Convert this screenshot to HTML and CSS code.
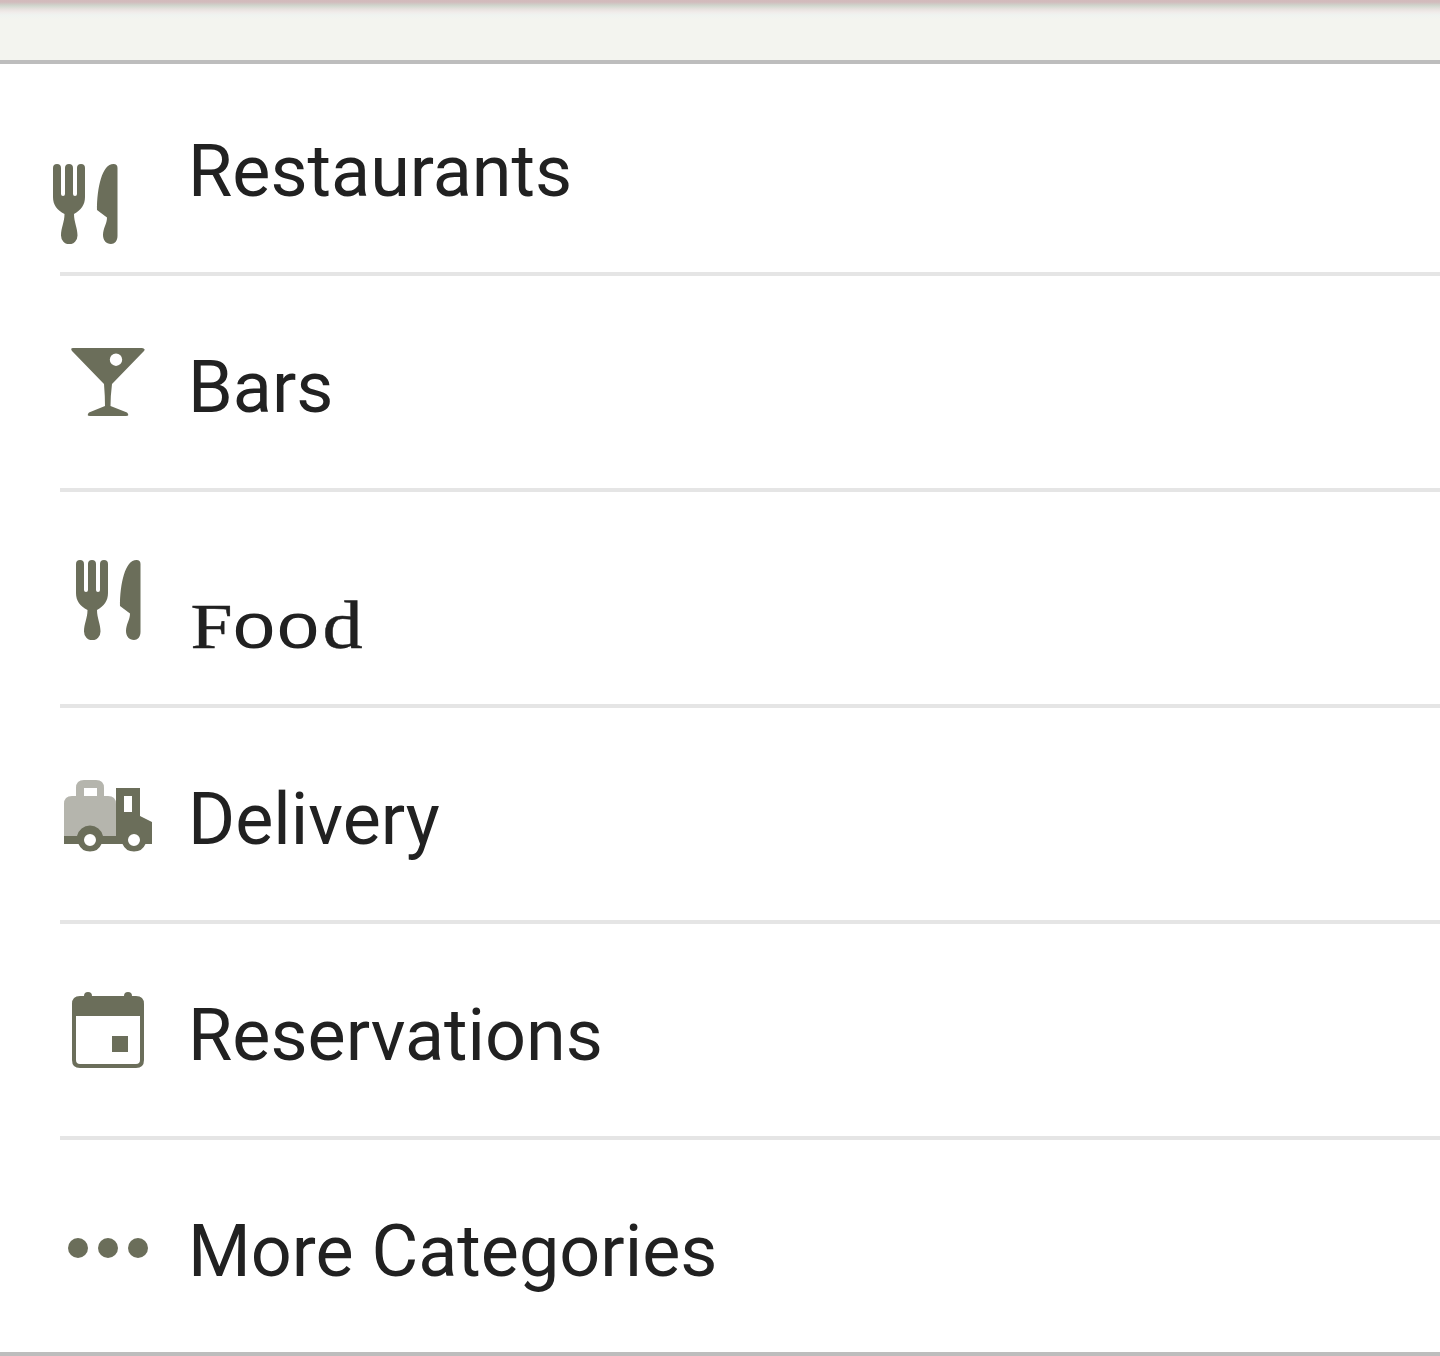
FILE: index.html
```html
<!DOCTYPE html>
<html lang="en">
<head>
<meta charset="utf-8">
<title>Categories</title>
<link rel="stylesheet" href="styles.css">
</head>
<body>
<svg class="symbols" aria-hidden="true">
  <symbol id="cutlery" viewBox="0 0 66 80">
    <path d="M0 4a4 4 0 0 1 8 0v26a2 2 0 0 0 4 0V4a4 4 0 0 1 8 0v26a2 2 0 0 0 4 0V4a4 4 0 0 1 8 0v29c0 8-4 13-11 17c0 8 3.500 14 3.500 21.500a8 8.500 0 0 1-16.500 0C8 64 11.500 58 11.500 50C4 46 0 41 0 33Z"/>
    <path d="M44 46C44 24 49 0 60.500 0a4 4 0 0 1 4 4v68c0 5-3 8-6.500 8c-5 0-8-4-8-9c0-7 4-11 4-17.500Z"/>
  </symbol>
</svg>
<header class="top"></header>
<ul class="list">
  <li class="row row-first">
    <svg class="icon"><use href="#cutlery" x="13" y="20" width="66" height="80"/></svg>
    <span class="label">Restaurants</span>
  </li>
  <li class="row">
    <svg class="icon" viewBox="0 0 120 120"><path fill-rule="evenodd" d="M25 12H94Q98 13 96 15L64 48Q62.500 60 62.500 70L79 76.500Q82 80 78 80H42Q38 80 41 76.500L57 70Q57 60 56 48L24 15Q22 12 25 12ZM68 17.500a6.200 6.200 0 1 0 0 12.400a6.200 6.200 0 1 0 0-12.400Z"/></svg>
    <span class="label">Bars</span>
  </li>
  <li class="row">
    <svg class="icon"><use href="#cutlery" x="28" y="8" width="66" height="80"/></svg>
    <svg class="label-typed" viewBox="0 0 200 80"><text transform="scale(1.2 1)" x="-0.500 33.400 70 109.500" y="58"><tspan class="cap">F</tspan>oo<tspan class="stem">d</tspan></text></svg>
  </li>
  <li class="row">
    <svg class="icon" viewBox="0 0 120 120">
      <path class="pale" fill-rule="evenodd" d="M16 68V36q0-8 8-8h4v-8q0-8 8-8h12q8 0 8 8v8h4q8 0 8 8v32H52a10 10 0 0 0-20 0ZM36 20v8h13v-8Z"/>
      <path fill-rule="evenodd" d="M68 20H92V48L104 54V76H97.500a12.500 12.500 0 0 1-23 0H53.500a12.500 12.500 0 0 1-23 0H16V68H29a13.300 13.300 0 0 1 26 0H68ZM76 28V44H84V28ZM42 66a6 6 0 1 0 0 12a6 6 0 1 0 0-12ZM86 66a6 6 0 1 0 0 12a6 6 0 1 0 0-12Z"/>
    </svg>
    <span class="label">Delivery</span>
  </li>
  <li class="row">
    <svg class="icon" viewBox="0 0 120 120">
      <path fill-rule="evenodd" d="M32 12H36a4 4 0 0 1 8 0H76a4 4 0 0 1 8 0H88q8 0 8 8V76q0 8-8 8H32q-8 0-8-8V20q0-8 8-8ZM28 32V76q0 4 4 4H88q4 0 4-4V32Z"/>
      <path d="M64 52h16v16H64Z"/>
    </svg>
    <span class="label">Reservations</span>
  </li>
  <li class="row row-last">
    <svg class="icon" viewBox="0 0 120 120"><circle cx="30" cy="48" r="10"/><circle cx="60" cy="48" r="10"/><circle cx="90" cy="48" r="10"/></svg>
    <span class="label">More Categories</span>
  </li>
</ul>
</body>
</html>
```
FILE: styles.css
```css
* { box-sizing: border-box; }
body {
  margin: 0;
  background: #fff;
  color: #212121;
  font-family: Roboto, sans-serif;
}
.symbols { display: none; }
.top {
  height: 64px;
  border-bottom: 4px solid #bdbdbd;
  background: linear-gradient(#d2babb 0, #d2bbbc 2px, #cfcac5 4px, #d2d8cf 6px, #e6e1de 9px, #f0ebe9 12px, #eff3f0 15px, #f3f4ef 19px);
}
.list {
  margin: 0;
  padding: 0;
  list-style: none;
  border-bottom: 4px solid #bdbdbd;
}
.row {
  display: flex;
  align-items: flex-start;
  height: 216px;
  margin-left: 60px;
  border-bottom: 4px solid #e5e5e5;
}
.row-last {
  height: 212px;
  border-bottom: 0;
}
.icon {
  flex: none;
  width: 120px;
  height: 120px;
  margin: 60px 20px 0 -12px;
  fill: #6b6e5a;
}
.row-first {
  height: 212px;
}
.row-first .icon {
  margin-top: 80px;
  margin-left: -20px;
  margin-right: 28px;
}
.pale { fill: #b5b5ad; }
.label {
  margin-top: 70px;
  font-size: 71.9px;
  line-height: 84px;
  white-space: nowrap;
}
.row-first .label { margin-top: 66px; }
.label-typed {
  width: 200px;
  height: 80px;
  margin: 98px 0 0 3px;
  overflow: visible;
  fill: #212121;
  font: 64px "Liberation Mono", monospace;
}
.cap,
.stem {
  font-family: "Liberation Serif", serif;
  stroke: #212121;
  stroke-width: 0.4px;
}
.cap { font-size: 63px; }
.stem { font-size: 67px; }
```
